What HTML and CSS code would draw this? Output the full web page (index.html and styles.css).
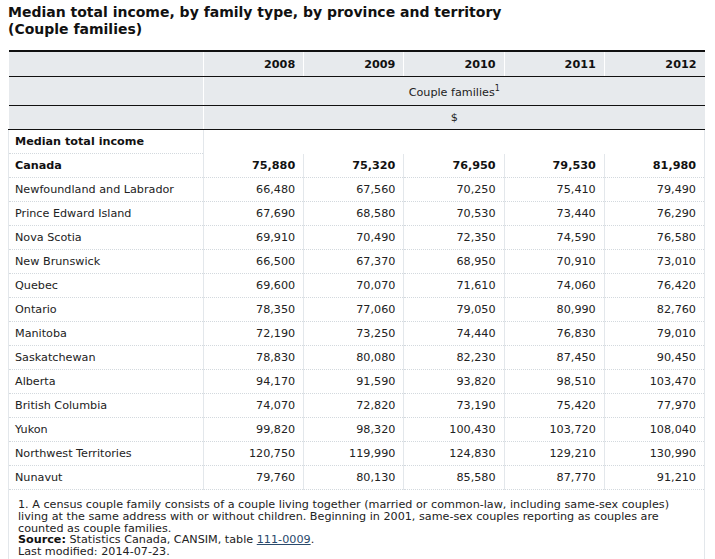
FILE: index.html
```html
<!DOCTYPE html>
<html lang="en">
<head>
<meta charset="utf-8">
<title>Median total income, by family type, by province and territory (Couple families)</title>
<link rel="stylesheet" href="styles.css">
</head>
<body>
<h1 class="title">Median total income, by family type, by province and territory<br>(Couple families)</h1>
<table class="data">
  <colgroup>
    <col class="c-first">
    <col><col><col><col><col>
  </colgroup>
  <thead>
    <tr class="h-years">
      <th class="h-empty"></th>
      <th>2008</th><th>2009</th><th>2010</th><th>2011</th><th>2012</th>
    </tr>
    <tr class="h-type">
      <th class="h-empty"></th>
      <th colspan="5" class="h-center">Couple families<sup>1</sup></th>
    </tr>
    <tr class="h-unit">
      <th class="h-empty"></th>
      <th colspan="5" class="h-center">$</th>
    </tr>
  </thead>
  <tbody>
    <tr class="r-group">
      <th class="stub bold">Median total income</th>
      <td colspan="5" class="blank"></td>
    </tr>
    <tr class="r-total">
      <th class="stub bold">Canada</th>
      <td>75,880</td><td>75,320</td><td>76,950</td><td>79,530</td><td>81,980</td>
    </tr>
    <tr><th class="stub">Newfoundland and Labrador</th><td>66,480</td><td>67,560</td><td>70,250</td><td>75,410</td><td>79,490</td></tr>
    <tr><th class="stub">Prince Edward Island</th><td>67,690</td><td>68,580</td><td>70,530</td><td>73,440</td><td>76,290</td></tr>
    <tr><th class="stub">Nova Scotia</th><td>69,910</td><td>70,490</td><td>72,350</td><td>74,590</td><td>76,580</td></tr>
    <tr><th class="stub">New Brunswick</th><td>66,500</td><td>67,370</td><td>68,950</td><td>70,910</td><td>73,010</td></tr>
    <tr><th class="stub">Quebec</th><td>69,600</td><td>70,070</td><td>71,610</td><td>74,060</td><td>76,420</td></tr>
    <tr><th class="stub">Ontario</th><td>78,350</td><td>77,060</td><td>79,050</td><td>80,990</td><td>82,760</td></tr>
    <tr><th class="stub">Manitoba</th><td>72,190</td><td>73,250</td><td>74,440</td><td>76,830</td><td>79,010</td></tr>
    <tr><th class="stub">Saskatchewan</th><td>78,830</td><td>80,080</td><td>82,230</td><td>87,450</td><td>90,450</td></tr>
    <tr><th class="stub">Alberta</th><td>94,170</td><td>91,590</td><td>93,820</td><td>98,510</td><td>103,470</td></tr>
    <tr><th class="stub">British Columbia</th><td>74,070</td><td>72,820</td><td>73,190</td><td>75,420</td><td>77,970</td></tr>
    <tr><th class="stub">Yukon</th><td>99,820</td><td>98,320</td><td>100,430</td><td>103,720</td><td>108,040</td></tr>
    <tr><th class="stub">Northwest Territories</th><td>120,750</td><td>119,990</td><td>124,830</td><td>129,210</td><td>130,990</td></tr>
    <tr><th class="stub">Nunavut</th><td>79,760</td><td>80,130</td><td>85,580</td><td>87,770</td><td>91,210</td></tr>
  </tbody>
  <tfoot>
    <tr>
      <td colspan="6" class="notes">
        1. A census couple family consists of a couple living together (married or common-law, including same-sex couples)<br>living at the same address with or without children. Beginning in 2001, same-sex couples reporting as couples are<br>counted as couple families.<br>
        <strong>Source:</strong> Statistics Canada, CANSIM, table <a href="#">111-0009</a>.<br>
        Last modified: 2014-07-23.
      </td>
    </tr>
  </tfoot>
</table>
</body>
</html>
```

FILE: styles.css
```css
html, body {
  background: #ffffff;
}
body {
  margin: 4px 8px 0;
  font-family: "DejaVu Sans", Verdana, sans-serif;
  color: #222;
  font-size: 11.2px;
}
.title {
  margin: 0 0 12px;
  font-size: 14px;
  line-height: 17px;
  font-weight: bold;
  color: #111;
}
.data {
  width: 697px;
  border-collapse: collapse;
  table-layout: fixed;
  border-top: 2px solid #111;
}
.c-first {
  width: 195px;
}
.data th,
.data td {
  padding: 4px 8px 4px 5px;
  line-height: 15px;
  font-size: 11.2px;
  vertical-align: middle;
}
.data thead th {
  background: #e7eaed;
  color: #111;
  border-bottom: 1px solid #111;
  border-left: 1px solid #fff;
  text-align: right;
  font-weight: bold;
}
.data thead .h-years th {
  padding-top: 5px;
}
.data thead th:first-child {
  border-left: none;
}
.data thead .h-center {
  text-align: center;
  font-weight: normal;
  color: #222;
  padding-left: 0;
  padding-right: 0;
}
.data thead .h-type th {
  padding-top: 8px;
  padding-bottom: 5px;
}
.h-type sup {
  font-size: 8px;
  line-height: 0;
  vertical-align: 5px;
}
.data tbody th,
.data tbody td {
  border-bottom: 1px dotted #d3d9de;
  border-left: 1px solid #e3e7eb;
  border-right: 1px solid #e3e7eb;
}
.data tbody td {
  text-align: right;
}
.data tbody th.stub {
  text-align: left;
  font-weight: normal;
  padding-left: 6px;
}
.data tbody th.bold,
.r-total td {
  font-weight: bold;
  color: #111;
}
.data tbody td.blank {
  border-bottom: none;
}
.data tfoot td {
  border-left: 1px solid #e3e7eb;
  border-right: 1px solid #e3e7eb;
}
.data tfoot td.notes {
  padding: 9px 8px 4px 9px;
  line-height: 11.75px;
  font-size: 11.2px;
  color: #222;
}
.notes strong {
  color: #111;
}
.notes a {
  color: #2a4a6c;
  text-decoration: underline;
}
```
